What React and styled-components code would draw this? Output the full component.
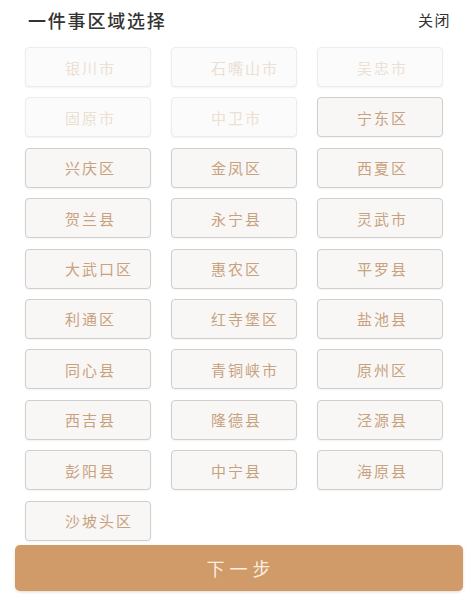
import React from "react";
import styled, { createGlobalStyle } from "styled-components";

const GlobalStyle = createGlobalStyle`
  html, body {
    margin: 0;
    padding: 0;
    background: #fff;
  }
  body {
    font-family: "Noto Sans CJK SC", "Noto Sans", sans-serif;
  }
`;

const Page = styled.div`
  width: 465px;
  height: 595px;
  display: flex;
  flex-direction: column;
  box-sizing: border-box;
  overflow: hidden;
`;

const Header = styled.div`
  height: 47px;
  display: flex;
  justify-content: space-between;
  align-items: flex-start;
  padding: 6px 14px 0 28px;
  box-sizing: border-box;
`;

const Title = styled.div`
  font-size: 18px;
  line-height: 28px;
  letter-spacing: 1.8px;
  font-weight: 500;
  color: #333;
`;

const Close = styled.div`
  font-size: 15px;
  line-height: 28px;
  letter-spacing: 1.5px;
  color: #333;
`;

const Grid = styled.div`
  display: grid;
  grid-template-columns: repeat(3, 126px);
  grid-auto-rows: 40px;
  column-gap: 20px;
  row-gap: 10.4px;
  padding: 0 0 0 25px;
`;

const Region = styled.div`
  box-sizing: border-box;
  height: 40px;
  border-radius: 4px;
  display: flex;
  align-items: center;
  padding-left: 39px;
  font-size: 15px;
  letter-spacing: 2px;
  border: 1.5px solid ${({ disabled }) => (disabled ? "#ececea" : "#d2cecb")};
  background: ${({ disabled }) => (disabled ? "#fbfbfb" : "#f8f7f6")};
  color: ${({ disabled }) => (disabled ? "#ecdfd3" : "#c8a27e")};
  box-shadow: 0 1px 2px rgba(0, 0, 0, 0.05);
`;

const NextButton = styled.div`
  margin: 4px 2px 0 15px;
  height: 46px;
  border-radius: 5px;
  background: #d09a69;
  color: #fbeee2;
  font-size: 18px;
  letter-spacing: 5px;
  display: flex;
  align-items: center;
  justify-content: center;
  padding-left: 4px;
  box-shadow: 0 1px 3px rgba(0, 0, 0, 0.15);
`;

const regions = [
  { name: "银川市", disabled: true },
  { name: "石嘴山市", disabled: true },
  { name: "吴忠市", disabled: true },
  { name: "固原市", disabled: true },
  { name: "中卫市", disabled: true },
  { name: "宁东区" },
  { name: "兴庆区" },
  { name: "金凤区" },
  { name: "西夏区" },
  { name: "贺兰县" },
  { name: "永宁县" },
  { name: "灵武市" },
  { name: "大武口区" },
  { name: "惠农区" },
  { name: "平罗县" },
  { name: "利通区" },
  { name: "红寺堡区" },
  { name: "盐池县" },
  { name: "同心县" },
  { name: "青铜峡市" },
  { name: "原州区" },
  { name: "西吉县" },
  { name: "隆德县" },
  { name: "泾源县" },
  { name: "彭阳县" },
  { name: "中宁县" },
  { name: "海原县" },
  { name: "沙坡头区" },
];

const App = () => {
  return (
    <Page>
      <GlobalStyle />
      <Header>
        <Title>一件事区域选择</Title>
        <Close>关闭</Close>
      </Header>
      <Grid>
        {regions.map((r) => (
          <Region key={r.name} disabled={r.disabled}>
            {r.name}
          </Region>
        ))}
      </Grid>
      <NextButton>下一步</NextButton>
    </Page>
  );
};

export default App;
